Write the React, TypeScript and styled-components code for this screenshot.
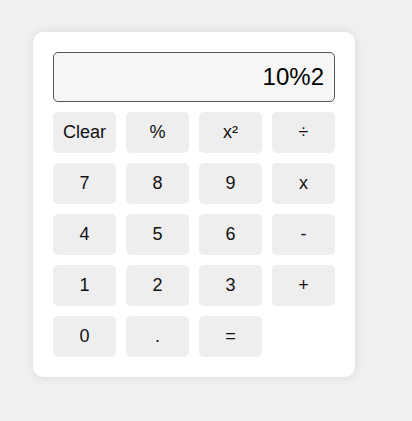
import React from "react";
import styled, { createGlobalStyle } from "styled-components";

const Global = createGlobalStyle`
  html, body { margin: 0; padding: 0; background: #f0f0f0; }
  body { font-family: Arial, "Liberation Sans", sans-serif; }
  #root { min-height: 421px; }
`;

const Page = styled.div`
  display: flex;
  align-items: flex-start;
  padding: 32px 0 0 33px;
`;

const Card = styled.div`
  width: 282px;
  padding: 20px;
  background: #ffffff;
  border-radius: 10px;
  box-shadow: 0 0 10px rgba(0, 0, 0, 0.1);
  display: flex;
  flex-direction: column;
  gap: 10px;
`;

const Display = styled.div`
  box-sizing: border-box;
  height: 50px;
  border: 1px solid #555;
  border-radius: 5px;
  background: #f7f6f6;
  display: flex;
  align-items: center;
  justify-content: flex-end;
  padding: 0 10px;
  font-size: 24px;
  color: #000;
`;

const Grid = styled.div`
  display: grid;
  grid-template-columns: repeat(4, 63px);
  grid-auto-rows: 41px;
  column-gap: 10px;
  row-gap: 10px;
`;

const Key = styled.button`
  border: none;
  border-radius: 5px;
  background: #eeeeee;
  font-family: Arial, "Liberation Sans", sans-serif;
  font-size: 18px;
  color: #111;
  padding: 0;
  cursor: pointer;
`;

const keys = [
  "Clear", "%", "x²", "÷",
  "7", "8", "9", "x",
  "4", "5", "6", "-",
  "1", "2", "3", "+",
  "0", ".", "=",
];

export default function App() {
  return (
    <>
      <Global />
      <Page>
        <Card>
          <Display>10%2</Display>
          <Grid>
            {keys.map((k) => (
              <Key key={k}>{k}</Key>
            ))}
          </Grid>
        </Card>
      </Page>
    </>
  );
}
